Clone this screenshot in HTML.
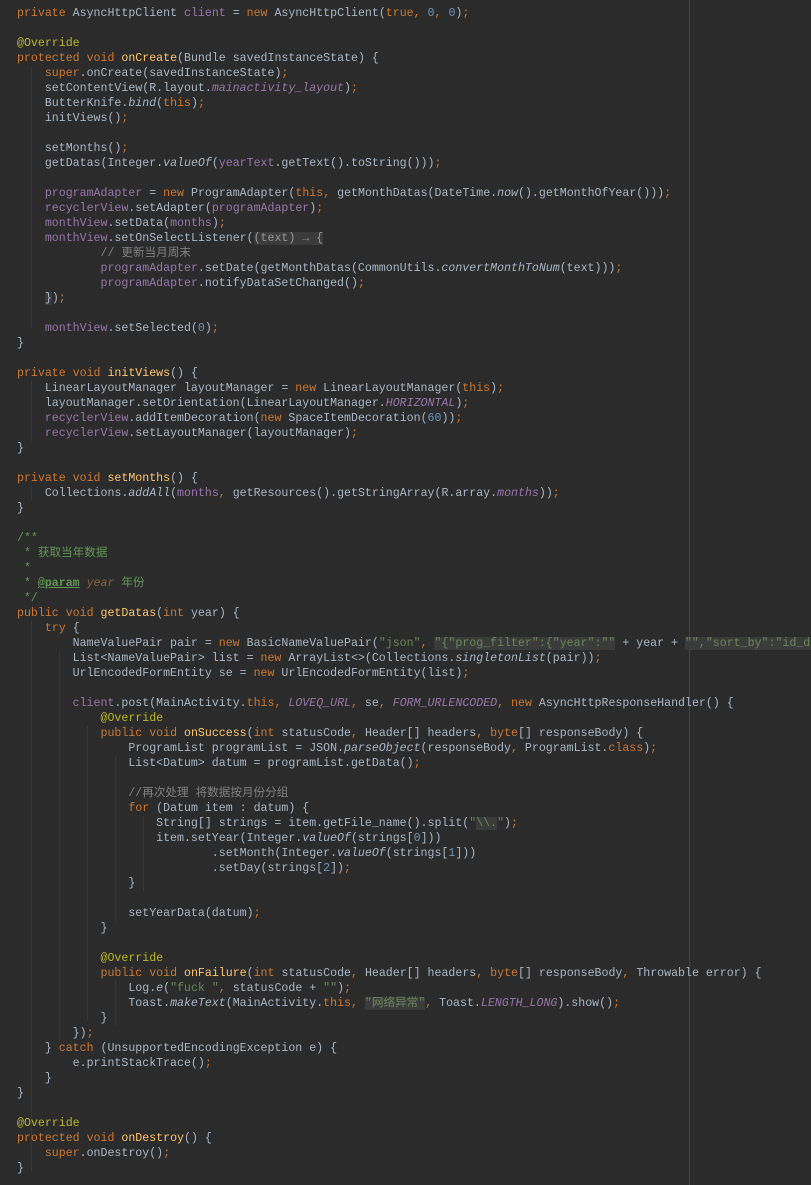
<!DOCTYPE html>
<html><head><meta charset="utf-8"><style>
html,body{margin:0;padding:0;background:#2b2b2b;width:811px;height:1185px;overflow:hidden;position:relative}
pre{margin:0;position:absolute;left:17px;top:6px;width:794px;overflow:hidden;font-family:"Liberation Mono","Noto Sans CJK SC",monospace;font-size:11.6px;line-height:15px;color:#a9b7c6;white-space:pre}
.k{color:#cc7832}.f{color:#9876aa}.n{color:#6897bb}.s{color:#6a8759}.a{color:#bbb529}.m{color:#ffc66d}.c{color:#808080}.d{color:#629755}.i{font-style:italic}
.fi{color:#9876aa;font-style:italic}.bg{background:#3b3b3b}.u{text-decoration:underline}
.g{position:absolute;width:1px;background:#373737}
.r{position:absolute;left:689px;top:0;width:1px;height:1185px;background:#444}
</style></head><body>
<div class="r"></div>
<div class="g" style="left:31px;top:66px;height:262px"></div>
<div class="g" style="left:31px;top:381px;height:60px"></div>
<div class="g" style="left:31px;top:486px;height:15px"></div>
<div class="g" style="left:31px;top:621px;height:550px"></div>
<div class="g" style="left:59px;top:651px;height:390px"></div>
<div class="g" style="left:87px;top:726px;height:295px"></div>
<div class="g" style="left:115px;top:756px;height:165px"></div>
<div class="g" style="left:143px;top:816px;height:75px"></div>
<div class="g" style="left:115px;top:981px;height:45px"></div>
<pre><span class="k">private </span>AsyncHttpClient <span class="f">client </span>= <span class="k">new </span>AsyncHttpClient(<span class="k">true, </span><span class="n">0</span><span class="k">, </span><span class="n">0</span>)<span class="k">;</span>

<span class="a">@Override</span>
<span class="k">protected void </span><span class="m">onCreate</span>(Bundle savedInstanceState) {
    <span class="k">super</span>.onCreate(savedInstanceState)<span class="k">;</span>
    setContentView(R.layout.<span class="fi">mainactivity_layout</span>)<span class="k">;</span>
    ButterKnife.<span class="i">bind</span>(<span class="k">this</span>)<span class="k">;</span>
    initViews()<span class="k">;</span>

    setMonths()<span class="k">;</span>
    getDatas(Integer.<span class="i">valueOf</span>(<span class="f">yearText</span>.getText().toString()))<span class="k">;</span>

    <span class="f">programAdapter </span>= <span class="k">new </span>ProgramAdapter(<span class="k">this, </span>getMonthDatas(DateTime.<span class="i">now</span>().getMonthOfYear()))<span class="k">;</span>
    <span class="f">recyclerView</span>.setAdapter(<span class="f">programAdapter</span>)<span class="k">;</span>
    <span class="f">monthView</span>.setData(<span class="f">months</span>)<span class="k">;</span>
    <span class="f">monthView</span>.setOnSelectListener(<span class="bg" style="color:#999">(text) → {</span>
            <span class="c">// 更新当月周末</span>
            <span class="f">programAdapter</span>.setDate(getMonthDatas(CommonUtils.<span class="i">convertMonthToNum</span>(text)))<span class="k">;</span>
            <span class="f">programAdapter</span>.notifyDataSetChanged()<span class="k">;</span>
    <span class="bg">}</span>)<span class="k">;</span>

    <span class="f">monthView</span>.setSelected(<span class="n">0</span>)<span class="k">;</span>
}

<span class="k">private void </span><span class="m">initViews</span>() {
    LinearLayoutManager layoutManager = <span class="k">new </span>LinearLayoutManager(<span class="k">this</span>)<span class="k">;</span>
    layoutManager.setOrientation(LinearLayoutManager.<span class="fi">HORIZONTAL</span>)<span class="k">;</span>
    <span class="f">recyclerView</span>.addItemDecoration(<span class="k">new </span>SpaceItemDecoration(<span class="n">60</span>))<span class="k">;</span>
    <span class="f">recyclerView</span>.setLayoutManager(layoutManager)<span class="k">;</span>
}

<span class="k">private void </span><span class="m">setMonths</span>() {
    Collections.<span class="i">addAll</span>(<span class="f">months</span><span class="k">, </span>getResources().getStringArray(R.array.<span class="fi">months</span>))<span class="k">;</span>
}

<span class="d">/**</span>
<span class="d"> * 获取当年数据</span>
<span class="d"> *</span>
<span class="d"> * <b class="u">@param</b> </span><span class="i" style="color:#8a653b">year </span><span class="d">年份</span>
<span class="d"> */</span>
<span class="k">public void </span><span class="m">getDatas</span>(<span class="k">int </span>year) {
    <span class="k">try </span>{
        NameValuePair pair = <span class="k">new </span>BasicNameValuePair(<span class="s">"json"</span><span class="k">, </span><span class="s bg">"{"prog_filter":{"year":""</span> + year + <span class="s bg">"","sort_by":"id_desc"}}"</span>)<span class="k">;</span>
        List&lt;NameValuePair&gt; list = <span class="k">new </span>ArrayList&lt;&gt;(Collections.<span class="i">singletonList</span>(pair))<span class="k">;</span>
        UrlEncodedFormEntity se = <span class="k">new </span>UrlEncodedFormEntity(list)<span class="k">;</span>

        <span class="f">client</span>.post(MainActivity.<span class="k">this, </span><span class="fi">LOVEQ_URL</span><span class="k">, </span>se<span class="k">, </span><span class="fi">FORM_URLENCODED</span><span class="k">, new </span>AsyncHttpResponseHandler() {
            <span class="a">@Override</span>
            <span class="k">public void </span><span class="m">onSuccess</span>(<span class="k">int </span>statusCode<span class="k">, </span>Header[] headers<span class="k">, byte</span>[] responseBody) {
                ProgramList programList = JSON.<span class="i">parseObject</span>(responseBody<span class="k">, </span>ProgramList.<span class="k">class</span>)<span class="k">;</span>
                List&lt;Datum&gt; datum = programList.getData()<span class="k">;</span>

                <span class="c">//再次处理 将数据按月份分组</span>
                <span class="k">for </span>(Datum item : datum) {
                    String[] strings = item.getFile_name().split(<span class="s">"<span class="bg">\\.</span>"</span>)<span class="k">;</span>
                    item.setYear(Integer.<span class="i">valueOf</span>(strings[<span class="n">0</span>]))
                            .setMonth(Integer.<span class="i">valueOf</span>(strings[<span class="n">1</span>]))
                            .setDay(strings[<span class="n">2</span>])<span class="k">;</span>
                }

                setYearData(datum)<span class="k">;</span>
            }

            <span class="a">@Override</span>
            <span class="k">public void </span><span class="m">onFailure</span>(<span class="k">int </span>statusCode<span class="k">, </span>Header[] headers<span class="k">, byte</span>[] responseBody<span class="k">, </span>Throwable error) {
                Log.<span class="i">e</span>(<span class="s">"fuck "</span><span class="k">, </span>statusCode + <span class="s">""</span>)<span class="k">;</span>
                Toast.<span class="i">makeText</span>(MainActivity.<span class="k">this, </span><span class="s bg">"网络异常"</span><span class="k">, </span>Toast.<span class="fi">LENGTH_LONG</span>).show()<span class="k">;</span>
            }
        })<span class="k">;</span>
    } <span class="k">catch </span>(UnsupportedEncodingException e) {
        e.printStackTrace()<span class="k">;</span>
    }
}

<span class="a">@Override</span>
<span class="k">protected void </span><span class="m">onDestroy</span>() {
    <span class="k">super</span>.onDestroy()<span class="k">;</span>
}</pre>
</body></html>
